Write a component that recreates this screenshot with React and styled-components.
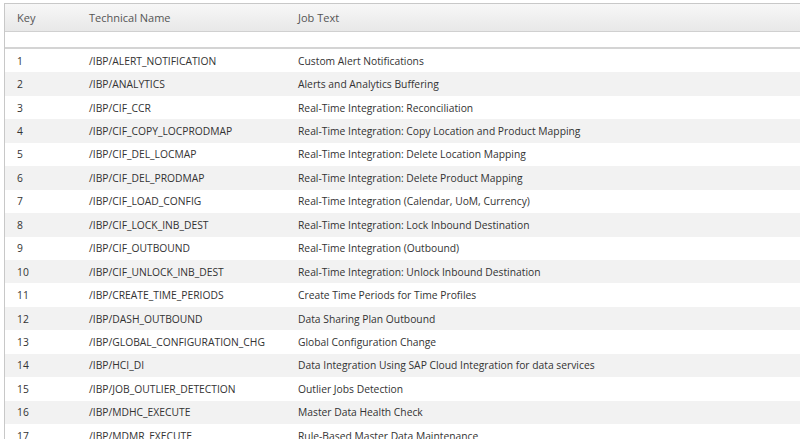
import React from "react";
import styled, { createGlobalStyle } from "styled-components";

const G = createGlobalStyle`body{margin:0;background:#fff;font-family:"Open Sans",sans-serif;}`;
const Wrap = styled.div`padding:3px 0 0 4px;height:436px;overflow:hidden;`;
const Table = styled.div`border-left:1px solid #c8c8c8;border-top:1px solid #c8c8c8;`;
const Row = styled.div`display:grid;grid-template-columns:84px 209px 1fr;align-items:center;height:23.45px;
 background:${p => p.$alt ? "#f2f2f2" : "#fff"};font-size:10.3px;color:#333;`;
const Head = styled(Row)`height:27px;background:linear-gradient(#f7f7f7,#e8e8e8);border-bottom:1px solid #d0d0d0;color:#555;font-size:11px;`;
const Empty = styled.div`height:15px;border-bottom:2px solid #d4d4d4;`;
const Cell = styled.div`padding-left:${p => p.$first ? "12px" : "0"};white-space:nowrap;`;

const data = [
["/IBP/ALERT_NOTIFICATION","Custom Alert Notifications"],
["/IBP/ANALYTICS","Alerts and Analytics Buffering"],
["/IBP/CIF_CCR","Real-Time Integration: Reconciliation"],
["/IBP/CIF_COPY_LOCPRODMAP","Real-Time Integration: Copy Location and Product Mapping"],
["/IBP/CIF_DEL_LOCMAP","Real-Time Integration: Delete Location Mapping"],
["/IBP/CIF_DEL_PRODMAP","Real-Time Integration: Delete Product Mapping"],
["/IBP/CIF_LOAD_CONFIG","Real-Time Integration (Calendar, UoM, Currency)"],
["/IBP/CIF_LOCK_INB_DEST","Real-Time Integration: Lock Inbound Destination"],
["/IBP/CIF_OUTBOUND","Real-Time Integration (Outbound)"],
["/IBP/CIF_UNLOCK_INB_DEST","Real-Time Integration: Unlock Inbound Destination"],
["/IBP/CREATE_TIME_PERIODS","Create Time Periods for Time Profiles"],
["/IBP/DASH_OUTBOUND","Data Sharing Plan Outbound"],
["/IBP/GLOBAL_CONFIGURATION_CHG","Global Configuration Change"],
["/IBP/HCI_DI","Data Integration Using SAP Cloud Integration for data services"],
["/IBP/JOB_OUTLIER_DETECTION","Outlier Jobs Detection"],
["/IBP/MDHC_EXECUTE","Master Data Health Check"],
["/IBP/MDMR_EXECUTE","Rule-Based Master Data Maintenance"],
];

export default function App(){
  return <Wrap><G/><Table>
    <Head><Cell $first>Key</Cell><Cell>Technical Name</Cell><Cell>Job Text</Cell></Head>
    <Empty/>
    {data.map((d,i)=><Row key={i} $alt={i%2===1}><Cell $first>{i+1}</Cell><Cell>{d[0]}</Cell><Cell>{d[1]}</Cell></Row>)}
  </Table></Wrap>;
}
